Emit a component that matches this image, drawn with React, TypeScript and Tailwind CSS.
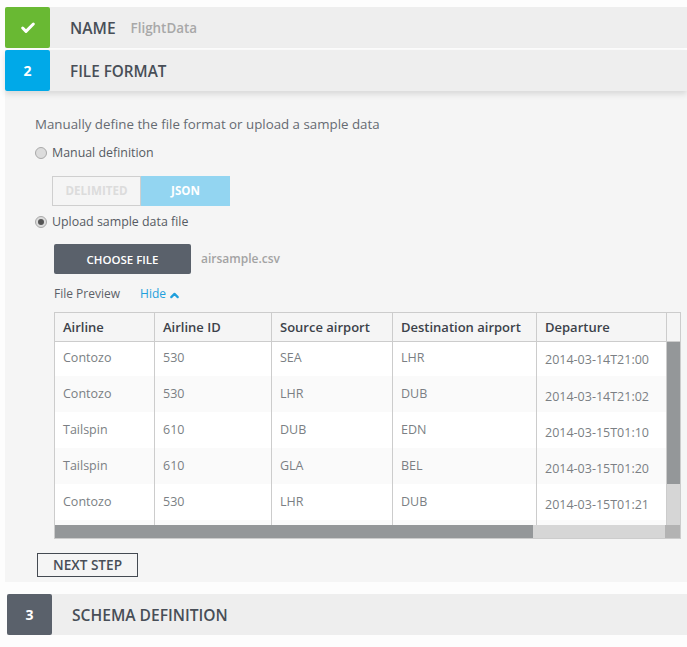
import { Check, ChevronUp } from 'lucide-react';

const rows = [
  ['Contozo', '530', 'SEA', 'LHR', '2014-03-14T21:00'],
  ['Contozo', '530', 'LHR', 'DUB', '2014-03-14T21:02'],
  ['Tailspin', '610', 'DUB', 'EDN', '2014-03-15T01:10'],
  ['Tailspin', '610', 'GLA', 'BEL', '2014-03-15T01:20'],
  ['Contozo', '530', 'LHR', 'DUB', '2014-03-15T01:21'],
];

const columns = [
  { title: 'Airline', width: 'w-[100px]' },
  { title: 'Airline ID', width: 'w-[117px]' },
  { title: 'Source airport', width: 'w-[121px]' },
  { title: 'Destination airport', width: 'w-[144px]' },
  { title: 'Departure', width: 'w-[129px]' },
];

function Radio({ checked, label }: { checked?: boolean; label: string }) {
  return (
    <div className="flex items-center h-[20px] text-[12.4px] text-[#555b63]">
      <span className="w-[12px] h-[12px] rounded-full border border-[#a9a9a9] bg-[#dcdcdc] flex items-center justify-center mr-[5px]">
        {checked && <span className="w-[6px] h-[6px] rounded-full bg-[#555]" />}
      </span>
      {label}
    </div>
  );
}

function cellPadding(r: number, c: number) {
  if (r === 0) return c === 4 ? 'pt-[2px]' : 'pb-[1px]';
  return c === 4 ? 'pt-[6px]' : '';
}

export default function App() {
  return (
    <div className="w-[687px] h-[647px] bg-[#fdfdfd] pt-[7px] overflow-hidden font-['Open_Sans',sans-serif]">
      <div className="ml-[5px] flex h-[41px] bg-[#eeeeee]">
        <div className="w-[45px] bg-[#69b933] rounded-[2px] flex items-center justify-center">
          <Check className="w-[16px] h-[16px] text-white" strokeWidth={4.5} />
        </div>
        <div className="flex items-center pl-[20px] pt-[2px]">
          <span className="text-[15.6px] font-semibold text-[#484e57]">NAME</span>
          <span className="ml-[15px] text-[13.4px] font-semibold text-[#a8a8a8]">FlightData</span>
        </div>
      </div>

      <div className="ml-[5px] mt-[2px] flex h-[41px] bg-[#eeeeee] shadow-[0_3px_6px_rgba(0,0,0,0.12)] relative">
        <div className="w-[45px] bg-[#00a9e8] rounded-[2px] flex items-center justify-center text-white text-[14px] font-bold">2</div>
        <div className="flex items-center pl-[20px] pt-[2px] text-[15.3px] font-semibold text-[#484e57]">FILE FORMAT</div>
      </div>

      <div className="ml-[5px] h-[491px] bg-[#f5f5f5] pl-[30px] pt-[23px]">
        <p className="text-[13.3px] leading-[20px] text-[#666b72]">Manually define the file format or upload a sample data</p>

        <div className="mt-[9px]">
          <Radio label="Manual definition" />
        </div>

        <div className="flex mt-[13px] ml-[17px] h-[30px] text-[11.6px] font-bold">
          <div className="w-[89px] border border-[#cfcfcf] text-[#dcdcdc] flex items-center justify-center">DELIMITED</div>
          <div className="w-[89px] bg-[#93d5f1] text-white flex items-center justify-center">JSON</div>
        </div>

        <div className="mt-[6px]">
          <Radio checked label="Upload sample data file" />
        </div>

        <div className="flex items-center mt-[12px] ml-[19px]">
          <div className="w-[137px] h-[30px] pt-[1px] bg-[#5a616b] rounded-[2px] text-white text-[11.5px] font-semibold flex items-center justify-center">CHOOSE FILE</div>
          <span className="ml-[10px] text-[12px] font-semibold text-[#a3a3a3]">airsample.csv</span>
        </div>

        <div className="flex items-center mt-[10px] ml-[19px] h-[20px] text-[12px]">
          <span className="text-[#5c6168]">File Preview</span>
          <span className="ml-[20px] text-[#1f9fdc]">Hide</span>
          <ChevronUp className="ml-[2px] mt-[2px] w-[13px] h-[13px] text-[#1f9fdc]" strokeWidth={4} />
        </div>

        <div className="mt-[8px] ml-[19px] w-[627px] h-[227px] border border-[#cccccc] flex flex-col">
          <div className="flex h-[212px]">
            <div className="w-[611px] flex flex-col">
              <div className="flex h-[29px] bg-[#f5f5f5] border-b border-[#cccccc] shrink-0">
                {columns.map((col, i) => (
                  <div key={col.title} className={`${col.width} ${i < 4 ? 'border-r border-[#cccccc]' : ''} pl-[8px] pt-[2px] flex items-center text-[13px] font-semibold text-[#3c424a]`}>
                    {col.title}
                  </div>
                ))}
              </div>
              <div className="flex-1 overflow-hidden bg-[#fafafa]">
                {rows.map((row, r) => (
                  <div key={r} className={`flex ${r === 0 ? 'h-[34px]' : 'h-[36px]'} ${r % 2 === 0 ? 'bg-white' : 'bg-[#fafafa]'}`}>
                    {row.map((cell, c) => (
                      <div
                        key={c}
                        className={`${columns[c].width} ${c < 4 ? 'border-r border-[#cccccc]' : ''} pl-[8px] text-[12.5px] text-[#7b7f84] flex items-center ${cellPadding(r, c)}`}
                      >
                        {cell}
                      </div>
                    ))}
                  </div>
                ))}
                <div className="flex h-[5px]">
                  {columns.map((col, c) => (
                    <div key={c} className={`${col.width} ${c < 4 ? 'border-r border-[#cccccc]' : ''}`} />
                  ))}
                </div>
              </div>
            </div>
            <div className="w-[15px] flex flex-col border-l border-[#cccccc]">
              <div className="h-[29px] bg-[#f5f5f5] border-b border-[#cccccc] shrink-0" />
              <div className="h-[142px] bg-[#949799] shrink-0" />
              <div className="flex-1 bg-[#d6d6d6]" />
            </div>
          </div>
          <div className="flex h-[14px]">
            <div className="w-[478px] bg-[#949799]" />
            <div className="flex-1 bg-[#d6d6d6]" />
            <div className="w-[15px] bg-[#b3b3b3]" />
          </div>
        </div>

        <div className="mt-[14px] ml-[2px] w-[101px] h-[24px] border border-[#444a52] text-[13.6px] font-semibold text-[#484e57] flex items-center justify-center">
          NEXT STEP
        </div>
      </div>

      <div className="ml-[7px] mt-[12px] flex h-[41px] bg-[#eeeeee]">
        <div className="w-[45px] bg-[#5a616b] rounded-[2px] flex items-center justify-center text-white text-[14px] font-bold">3</div>
        <div className="flex items-center pl-[20px] pt-[2px] text-[15.6px] font-semibold text-[#484e57]">SCHEMA DEFINITION</div>
      </div>
    </div>
  );
}
